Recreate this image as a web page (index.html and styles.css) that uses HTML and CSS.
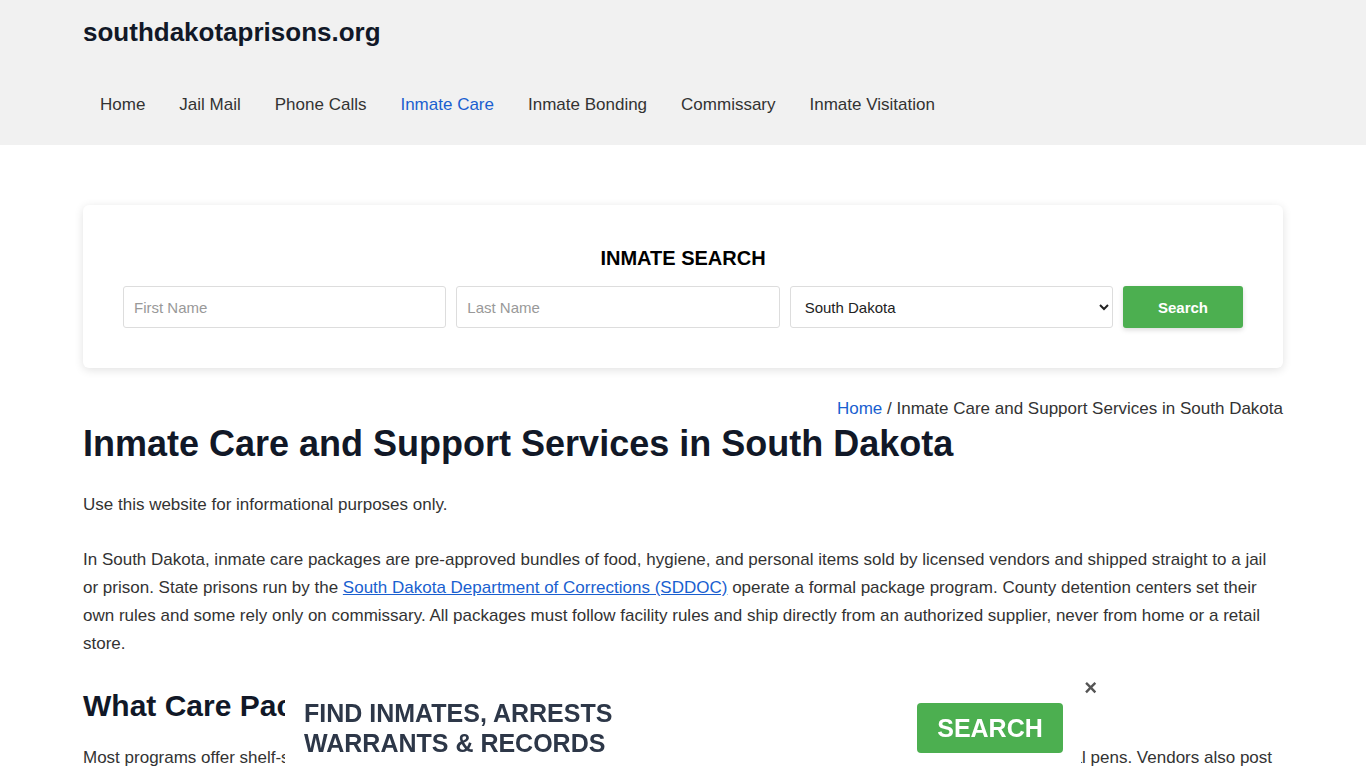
FILE: index.html
```html
<!DOCTYPE html>
<html lang="en">
<head>
    <meta charset="UTF-8">
    <meta name="viewport" content="width=device-width, initial-scale=1.0">
    <title>Inmate Care and Support Services in South Dakota</title>
    <link rel="stylesheet" href="styles.css">
</head>
<body>

<!-- Site header -->
<header class="site-header">
    <div class="wrap">
        <a class="logo" href="#">southdakotaprisons.org</a>
        <nav class="main-nav">
            <a href="#">Home</a>
            <a href="#">Jail Mail</a>
            <a href="#">Phone Calls</a>
            <a href="#" class="active">Inmate Care</a>
            <a href="#">Inmate Bonding</a>
            <a href="#">Commissary</a>
            <a href="#">Inmate Visitation</a>
        </nav>
    </div>
</header>

<main class="wrap">
    <!-- Inmate search box -->
    <section class="search-card">
        <h2>INMATE SEARCH</h2>
        <form class="search-form">
            <input type="text" placeholder="First Name">
            <input type="text" placeholder="Last Name">
            <select>
                <option>South Dakota</option>
            </select>
            <button type="submit">Search</button>
        </form>
    </section>

    <div class="breadcrumb"><a href="#">Home</a> / Inmate Care and Support Services in South Dakota</div>

    <article class="content">
        <h1>Inmate Care and Support Services in South Dakota</h1>
        <p>Use this website for informational purposes only.</p>
        <p>In South Dakota, inmate care packages are pre-approved bundles of food, hygiene, and personal items sold by licensed vendors and shipped straight to a jail or prison. State prisons run by the <a href="#">South Dakota Department of Corrections (SDDOC)</a> operate a formal package program. County detention centers set their own rules and some rely only on commissary. All packages must follow facility rules and ship directly from an authorized supplier, never from home or a retail store.</p>
        <h2>What Care Packages Include</h2>
        <p>Most programs offer shelf-stable snacks, soups, drinks, hygiene items, socks, T-shirts, stamped envelopes, writing paper, and several pens. Vendors also post current catalogs for each facility online.</p>
    </article>
</main>

<!-- Bottom banner -->
<div class="bottom-ad">
    <span class="ad-close">&times;</span>
    <div class="ad-text">FIND INMATES, ARRESTS<br>WARRANTS &amp; RECORDS</div>
    <a href="#" class="ad-btn">SEARCH</a>
</div>

</body>
</html>
```

FILE: styles.css
```css
/* Basic styling */
body {
    font-family: "Liberation Sans", Arial, sans-serif;
    background-color: #fff;
    color: #333;
    margin: 0;
    padding: 0;
}
a {
    color: #1a5fd0;
}
.wrap {
    width: 1200px;
    margin: 0 auto;
}

/* Header */
.site-header {
    background-color: #f1f1f1;
    padding: 16px 0 20px;
}
.logo {
    display: block;
    font-size: 26px;
    line-height: 32px;
    font-weight: bold;
    color: #111827;
    text-decoration: none;
}
.main-nav {
    display: flex;
    margin-top: 37px;
}
.main-nav a {
    padding: 10px 17px;
    font-size: 17px;
    line-height: 20px;
    color: #333;
    text-decoration: none;
}
.main-nav a.active {
    color: #1a5fd0;
}

/* Search card */
.search-card {
    margin-top: 60px;
    background-color: #fff;
    border-radius: 6px;
    padding: 41px 40px 40px;
    box-shadow: 0 2px 10px rgba(0, 0, 0, 0.12);
}
.search-card h2 {
    margin: 0 0 16px;
    text-align: center;
    font-size: 20px;
    line-height: 24px;
    color: #000;
}
.search-form {
    display: flex;
    gap: 10px;
}
.search-form input, .search-form select {
    flex: 1;
    min-width: 0;
    height: 42px;
    box-sizing: border-box;
    border: 1px solid #ddd;
    border-radius: 3px;
    padding: 0 10px;
    font-family: inherit;
    font-size: 15px;
    color: #222;
    background-color: #fff;
}
.search-form input::placeholder {
    color: #999;
}
.search-form button {
    width: 120px;
    height: 42px;
    border: none;
    border-radius: 3px;
    background-color: #4caf50;
    color: #fff;
    font-family: inherit;
    font-weight: bold;
    font-size: 15px;
    box-shadow: 0 2px 5px rgba(0, 0, 0, 0.15);
    cursor: pointer;
}

/* Breadcrumb */
.breadcrumb {
    margin-top: 31px;
    text-align: right;
    font-size: 17px;
    line-height: 20px;
}
.breadcrumb a {
    text-decoration: none;
}

/* Article */
.content h1 {
    margin: 3px 0 26px;
    font-size: 36px;
    line-height: 43px;
    color: #111827;
}
.content p {
    margin: 0 0 27px;
    font-size: 17px;
    line-height: 28px;
}
.content h2 {
    margin: 30px 0 20px;
    font-size: 30px;
    line-height: 36px;
    color: #111827;
}

/* Fixed banner at the bottom */
.bottom-ad {
    position: fixed;
    bottom: 0;
    left: 50%;
    width: 796px;
    margin-left: -398px;
    box-sizing: border-box;
    padding: 25px 18px 10px 19px;
    background-color: #fff;
    display: flex;
    justify-content: space-between;
    align-items: center;
}
.ad-text {
    font-size: 25px;
    line-height: 30px;
    font-weight: bold;
    color: #2d3748;
}
.ad-btn {
    width: 146px;
    height: 50px;
    line-height: 50px;
    text-align: center;
    background-color: #4caf50;
    border-radius: 4px;
    color: #fff;
    font-size: 25px;
    font-weight: bold;
    text-decoration: none;
}
.ad-close {
    position: absolute;
    top: 4px;
    right: -16px;
    font-size: 22px;
    line-height: 22px;
    font-weight: bold;
    color: #555;
    cursor: pointer;
}
```
